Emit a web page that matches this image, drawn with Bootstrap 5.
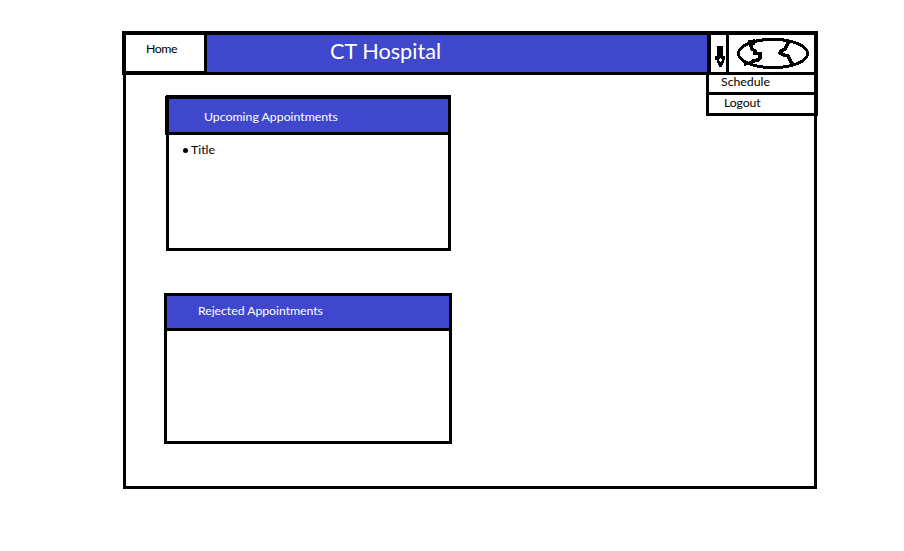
<!DOCTYPE html>
<html lang="en">
<head>
<meta charset="utf-8">
<title>CT Hospital</title>
<link href="https://cdn.jsdelivr.net/npm/bootstrap@5.3.0/dist/css/bootstrap.min.css" rel="stylesheet">
<style>
body{font:12.3px/16px Lato,"Noto Sans",sans-serif;color:#000;background:#fff;padding:31px 0 0 122px}
.page{width:696px;height:458px}
.frame{border:3px solid #000;border-top:0;margin:0 1px 0 1px;height:414px;padding:20px 0 0 38px}
.topbar{height:44px;border:solid #000;border-width:4px 4px 3px 4px;border-radius:0;padding:0}
.home{width:81px;border-right:3px solid #000;border-bottom:1px solid #000;color:#000;padding:6px 0 0 20px;text-decoration:none;letter-spacing:-.4px}
.brand-area{width:500px;background:#3f48cc;color:#fff}
.brand-area h1{font-size:21.7px;line-height:26px;margin:3px 0 0 123px;font-weight:400}
.toggle{width:22px;border:solid #000;border-width:0 3px 0 4px;background:#fff;padding:0}
.user-menu{left:584px;top:44px;width:112px;border:solid #000;border-width:0 4px 3px 3px;border-radius:0;padding:0;min-width:0;z-index:2}
.user-menu a{display:block;height:17px;line-height:14px;color:#000;text-decoration:none;padding-left:12px}
.user-menu a+a{border-top:3px solid #000;height:21px;line-height:16px;padding-left:15px;letter-spacing:-.15px}
.panel{border:3px solid #000;border-radius:0;background:#fff}
.panel-head{background:#3f48cc;color:#fff;border-bottom:3px solid #000}
.upcoming{width:285px;height:156px;margin-left:2px;border-top-width:4px}
.upcoming .panel-head{height:39px;padding:10px 0 0 35px;margin:-3px 0 0 -4px;border-left:4px solid #000;border-top:3px solid #000}
.upcoming ul{padding:7px 0 0 14px;margin:0;list-style:none}
.dot{width:5px;height:5px;margin-right:3px}
.rejected{width:288px;height:151px;margin-top:42px}
.rejected .panel-head{height:35px;padding:7px 0 0 31px;letter-spacing:-.05px}
</style>
</head>
<body>
<div class="page position-relative">
  <nav class="topbar d-flex align-items-stretch">
    <a class="home flex-shrink-0" href="#">Home</a>
    <div class="brand-area flex-shrink-0"><h1>CT Hospital</h1></div>
    <button class="toggle flex-shrink-0" aria-label="Open menu">
      <svg class="d-block" width="15" height="37" shape-rendering="crispEdges"><path d="M6 11h6v10h2v4h-1v3h-1v2h-1v2H8v-2H7v-2H6v-3H4v-4h2z"/><path d="M8 24h1v-1h1v1h1v2h-1v1H9v-1H8z" fill="#fff"/></svg>
    </button>
    <svg class="flex-shrink-0" width="85" height="37" viewBox="729 35 85 37" fill="none" stroke="#000" stroke-width="3" shape-rendering="crispEdges"><ellipse cx="773" cy="53.5" rx="34.5" ry="14.2"/><path stroke-width="3.6" d="M755 41l-5 1 2 7 3 2v2l5 1v4l-2 2-5 1-2 2-7 1M751 41l4 3M789 41l-4 8-4 2-1 2 4 2 4 1 2 4 3 5"/></svg>
  </nav>
  <div class="user-menu position-absolute bg-white">
    <a href="#">Schedule</a><a href="#">Logout</a>
  </div>
  <main class="frame">
    <section class="card panel upcoming">
      <div class="panel-head">Upcoming Appointments</div>
      <ul><li class="d-flex align-items-center"><span class="dot bg-black rounded-circle"></span>Title</li></ul>
    </section>
    <section class="card panel rejected">
      <div class="panel-head">Rejected Appointments</div>
    </section>
  </main>
</div>
</body>
</html>
